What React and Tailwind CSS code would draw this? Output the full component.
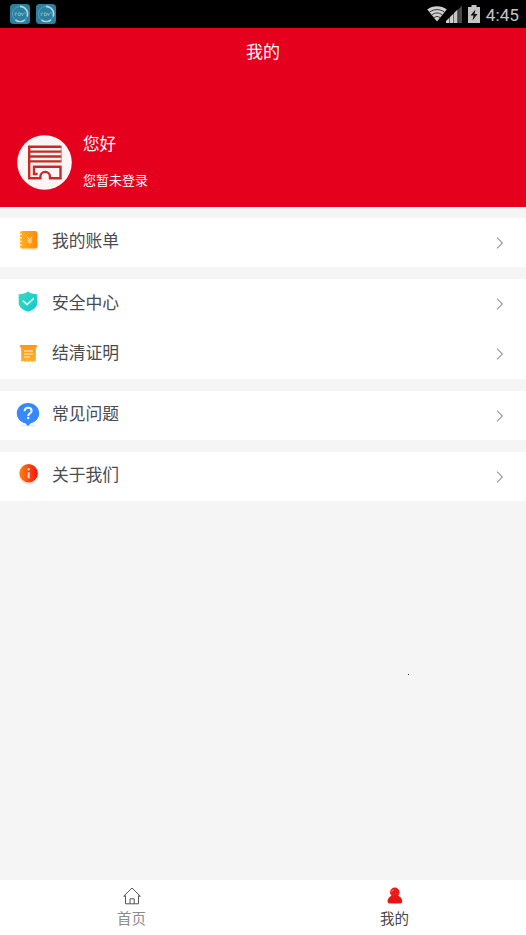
import { useId } from 'react';

const AppBadge = () => (
  <svg width="20" height="20" viewBox="0 0 20 20" className="block">
    <rect width="20" height="20" rx="3.5" fill="#2b7f9f" />
    <circle cx="10" cy="10" r="7.6" fill="none" stroke="#5a9db5" strokeWidth="1" />
    <path d="M10 2.4A7.6 7.6 0 0 1 17.2 12.4M15 15.8A7.6 7.6 0 0 1 5.5 16" fill="none" stroke="#b4d3de" strokeWidth="1.6" />
    <path d="M5.2 11.8V9h2M8.2 9h2.2v2.6H8.2zM11.4 9l1 2.6 1-2.6M14 9h1.5" fill="none" stroke="#8cc4d6" strokeWidth=".8" />
  </svg>
);

const WifiIcon = () => (
  <svg width="20" height="16" viewBox="0 0 21 16" preserveAspectRatio="none" className="block">
    <path d="M10.5 15.5 0.3 3.6C6-.8 15-.8 20.7 3.6z" fill="#d0d0d0" />
    <g fill="none" stroke="#222" strokeWidth=".9">
      <path d="M2.6 6.3C7 2.7 14 2.7 18.4 6.3" />
      <path d="M4.9 9C8.3 6.3 12.7 6.3 16.1 9" />
      <path d="M7.2 11.7C9.3 10.1 11.7 10.1 13.8 11.7" />
    </g>
  </svg>
);

const SignalIcon = () => (
  <svg width="16" height="17" viewBox="0 0 16 17" className="block">
    <path d="M0 17v-2l3.5-3.5V17zM4 17v-6l3.5-3.5V17z" fill="#d0d0d0" />
    <path d="M8 17V7l3.5-3.5V17z" fill="#c4c4c4" />
    <path d="M12.2 17V3.3L16 0v17z" fill="#4a4a4a" />
  </svg>
);

const BatteryIcon = () => (
  <svg width="12" height="18" viewBox="0 0 12 18" className="block">
    <path d="M3.5 0h5v2H12v16H0V2h3.5z" fill="#c4c4c4" />
    <path d="M7.5 4.5 2.5 10.5h3L4.5 15.5 9.5 9h-3z" fill="#111" />
  </svg>
);

const BankLogo = () => (
  <svg width="55" height="55" viewBox="0 0 55 55" className="block">
    <circle cx="27.5" cy="27.5" r="27.3" fill="#fbf6f5" />
    <g fill="none" stroke="#c52a26" strokeWidth="2.4">
      <path d="M11 11.8h33.5M12 16.6h32.5M12 21.5h32.5M12 26.4h32.5" />
      <path d="M12.2 11.8v31.5h11.2v-1.6a4.8 4.8 0 0 1 9.6 0v1.6h10.5V31.8H17V39h3.6" />
    </g>
    <path d="M44.1 11v16" stroke="#d9726e" strokeWidth=".9" />
  </svg>
);

const BillIcon = () => {
  const id = useId();
  return (
    <svg width="24" height="24" viewBox="0 0 24 24" className="-mt-[5px] block">
      <defs>
        <linearGradient id={id}>
          <stop offset="0" stopColor="#ffb11f" />
          <stop offset="1" stopColor="#ff8a0c" />
        </linearGradient>
      </defs>
      <rect x="5" y="4.5" width="17" height="17.5" rx="2" fill="#ffedd2" />
      <rect x="4" y="3" width="17.4" height="17.5" rx="2" fill={`url(#${id})`} />
      <path d="M3 6.3h3M3 9.8h3M3 13.3h3M3 16.8h3" stroke="#fff2da" strokeWidth="1.2" />
      <path d="m11.3 8.8 2.4 3 2.4-3M13.7 11.8v4M11.4 12.1H16M11.4 14H16" fill="none" stroke="#ffe3b4" strokeWidth="1" />
    </svg>
  );
};

const ShieldIcon = () => {
  const id = useId();
  return (
    <svg width="24" height="24" viewBox="0 0 24 24" className="-mt-[5px] block">
      <defs>
        <linearGradient id={id} x2="1" y2="1">
          <stop offset="0" stopColor="#35dcc0" />
          <stop offset="1" stopColor="#14c6cf" />
        </linearGradient>
      </defs>
      <path d="M3.5 7 12 4l10 3v7c0 4-4 7-9 9-5-2-9-4-9-8z" fill="#def7f6" />
      <path d="M12 1.6c2.6 2 5.5 2.6 9.3 2.7v8.6c0 4-4.2 6.9-9.3 8.7-5.1-1.8-9.3-4.7-9.3-8.7V4.3C6.5 4.2 9.4 3.6 12 1.6z" fill={`url(#${id})`} />
      <path d="m7.2 11 3.8 3.6 6.3-5.7" fill="none" stroke="#e9fffc" strokeWidth="1.6" strokeLinecap="round" strokeLinejoin="round" />
    </svg>
  );
};

const ProofIcon = () => {
  const id = useId();
  return (
    <svg width="24" height="24" viewBox="0 0 24 24" className="block">
      <defs>
        <linearGradient id={id} x2="0" y2="1">
          <stop offset="0" stopColor="#fb9a17" />
          <stop offset="1" stopColor="#ffae30" />
        </linearGradient>
      </defs>
      <path d="M5 4.2h15" stroke="#f99a1c" strokeWidth="2.4" strokeLinecap="round" />
      <path d="M5.2 4h14.6v16l-1.8-.9-1.8 1-1.8-1-1.8 1-1.8-1-1.8 1-1.8-1-2 1z" fill={`url(#${id})`} />
      <path d="M8 9h9M8 12h9M8 15h5.8" stroke="#fff3dc" strokeWidth="1.2" />
    </svg>
  );
};

const HelpIcon = () => (
  <svg width="24" height="26" viewBox="0 0 24 26" className="-mt-px block">
    <path d="M5 23.5h14" stroke="#dce9ff" strokeWidth="1.6" />
    <path d="M12 1c6.4 0 11.2 4.6 11.2 10.3 0 5-3.7 8.9-8.4 10L12 24l-2.8-2.7C4.5 20.2.8 16.3.8 11.3.8 5.6 5.6 1 12 1z" fill="#3788fb" />
    <path d="M8.6 9.3c0-2.2 1.5-3.5 3.5-3.5s3.5 1.3 3.5 3.1c0 2.5-3.4 2.5-3.4 5" fill="none" stroke="#eef5ff" strokeWidth="2" />
    <rect x="11.1" y="14.9" width="2.2" height="2.2" fill="#eef5ff" />
  </svg>
);

const InfoIcon = () => {
  const id = useId();
  return (
    <svg width="24" height="24" viewBox="0 0 24 24" className="-mt-[5px] block">
      <defs>
        <linearGradient id={id}>
          <stop offset="0" stopColor="#ff8412" />
          <stop offset=".5" stopColor="#fb4712" />
          <stop offset="1" stopColor="#fb1010" />
        </linearGradient>
      </defs>
      <circle cx="12.8" cy="13" r="9.7" fill="#ffe6df" />
      <circle cx="12.6" cy="11.3" r="9.2" fill={`url(#${id})`} />
      <path d="M12.7 10.3v6" stroke="#ffd9c8" strokeWidth="2" />
      <circle cx="12.7" cy="7.3" r="1.2" fill="#ffd9c8" />
    </svg>
  );
};

const Chevron = () => (
  <svg width="8" height="12" viewBox="0 0 8 12" className="block">
    <path d="M1 .7 6.4 6 1 11.3" fill="none" stroke="#999" strokeWidth="1.1" />
  </svg>
);

const HomeIcon = () => (
  <svg width="18" height="18" viewBox="0 0 18 18" className="block">
    <path d="M2.5 8.5v8.3h13V8.5M.7 9.2 9 1l8.3 8.2h-1.8M.7 9.2h1.8" fill="none" stroke="#555" strokeWidth="1" strokeLinejoin="round" />
    <path d="M7 16.8v-5h4.200v5" fill="none" stroke="#555" strokeWidth="1" />
  </svg>
);

const UserIcon = () => (
  <svg width="16" height="18" viewBox="0 0 16 18" className="block">
    <circle cx="7.8" cy="5.3" r="4.8" fill="#ee1b1b" />
    <path d="M4.5 8.8C2 9.8.6 12 .6 14.2c0 1.600 1 2.300 2.400 2.300h9.800c1.400 0 2.400-.7 2.400-2.300 0-2.200-1.400-4.400-4-5.400z" fill="#e91515" />
    <path d="M4.500 5.200c.2-1.300 1-2.100 2.200-2.300" fill="none" stroke="#ff9a92" strokeWidth=".8" />
  </svg>
);

const groups = [
  { size: 'h-[49px]', items: [{ label: '我的账单', icon: BillIcon }] },
  {
    size: 'h-[100px]',
    items: [
      { label: '安全中心', icon: ShieldIcon },
      { label: '结清证明', icon: ProofIcon },
    ],
  },
  { size: 'h-[49px]', items: [{ label: '常见问题', icon: HelpIcon }] },
  { size: 'h-[49px]', items: [{ label: '关于我们', icon: InfoIcon }] },
];

const MenuRow = ({ label, icon: Icon }) => (
  <button type="button" className="flex w-full flex-1 items-center pr-[22px] pl-4 text-left">
    <span className="flex w-6 justify-center">
      <Icon />
    </span>
    <span className="-mt-[5px] ml-3 flex-1 text-[16.8px] leading-6 text-[#484b50]">{label}</span>
    <Chevron />
  </button>
);

export default function App() {
  return (
    <div className="flex h-[935px] w-[526px] flex-col overflow-hidden bg-[#f5f5f5] font-['Noto_Sans_CJK_SC',sans-serif]">
      <div className="flex h-7 shrink-0 items-center bg-black pr-[7px] pl-[10px]">
        <div className="flex gap-[6px]">
          <AppBadge />
          <AppBadge />
        </div>
        <div className="ml-auto flex items-center">
          <WifiIcon />
          <span className="-ml-px">
            <SignalIcon />
          </span>
          <span className="ml-[6px]">
            <BatteryIcon />
          </span>
          <span className="ml-[6px] pt-px font-[Roboto,sans-serif] text-[17.2px] leading-7 text-[#c4c4c4]">4:45</span>
        </div>
      </div>

      <header className="h-[179px] shrink-0 bg-[#e5001d] text-white">
        <h1 className="pt-[11px] text-center text-[17px] leading-6">我的</h1>
        <div className="mt-[72px] flex pl-[17px]">
          <BankLogo />
          <div className="ml-[11px]">
            <p className="-mt-1 text-[16.6px] leading-6">您好</p>
            <p className="mt-4 text-[13px] leading-[18px]">您暂未登录</p>
          </div>
        </div>
      </header>

      <main className="flex flex-1 flex-col gap-3 pt-[11px]">
        {groups.map((group) => (
          <section key={group.items[0].label} className={`flex flex-col bg-white ${group.size}`}>
            {group.items.map((item) => (
              <MenuRow key={item.label} {...item} />
            ))}
          </section>
        ))}
        <span className="mt-[161px] ml-[408px] size-px bg-[#333]" />
      </main>

      <nav className="flex h-[55px] shrink-0 bg-white text-[14.5px] leading-5">
        <a className="flex flex-1 flex-col items-center pt-[7px] text-[#8c8c8c]">
          <HomeIcon />
          <span className="mt-[3px]">首页</span>
        </a>
        <a className="flex flex-1 flex-col items-center pt-[7px] text-[#484848]">
          <UserIcon />
          <span className="mt-[3px]">我的</span>
        </a>
      </nav>
    </div>
  );
}
